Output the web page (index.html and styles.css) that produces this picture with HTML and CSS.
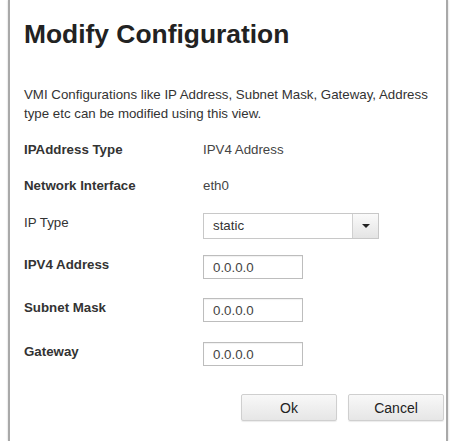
FILE: index.html
```html
<!DOCTYPE html>
<html lang="en">
<head>
    <meta charset="UTF-8">
    <meta name="viewport" content="width=device-width, initial-scale=1.0">
    <title>Modify Configuration</title>
    <link rel="stylesheet" href="styles.css">
</head>
<body>
    <div class="dialog">
        <h1>Modify Configuration</h1>
        <p class="intro">VMI Configurations like IP Address, Subnet Mask, Gateway, Address type etc can be modified using this view.</p>

        <div class="form">
            <div class="label">IPAddress Type</div>
            <div class="value">IPV4 Address</div>

            <div class="label">Network Interface</div>
            <div class="value">eth0</div>

            <!-- IP Type label is not bold in the original view -->
            <div class="label plain">IP Type</div>
            <div>
                <div class="select">
                    <span class="select-text">static</span>
                    <span class="select-btn"><span class="caret"></span></span>
                </div>
            </div>

            <div class="label">IPV4 Address</div>
            <div><input type="text" class="field" value="0.0.0.0"></div>

            <div class="label">Subnet Mask</div>
            <div><input type="text" class="field" value="0.0.0.0"></div>

            <div class="label">Gateway</div>
            <div><input type="text" class="field" value="0.0.0.0"></div>
        </div>

        <div class="buttons">
            <button class="btn">Ok</button>
            <button class="btn">Cancel</button>
        </div>
    </div>
</body>
</html>
```

FILE: styles.css
```css
body {
    margin: 0;
    background-color: #fff;
    font-family: "Liberation Sans", Arial, sans-serif;
    color: #333;
}
.dialog {
    margin-left: 8px;
    width: 440px;
    box-sizing: border-box;
    min-height: 441px;
    padding: 19px 2px 0 14px;
    border-left: 2px solid #a9a9a9;
    border-right: 2px solid #a9a9a9;
    box-shadow: 0 0 2px rgba(0, 0, 0, 0.2);
}
h1 {
    margin: 0;
    font-size: 26.4px;
    line-height: 30px;
    font-weight: bold;
    color: #222;
}
.intro {
    margin: 36px 0 0;
    font-size: 13.3px;
    line-height: 19px;
    color: #333;
}
.form {
    display: grid;
    grid-template-columns: 179px auto;
    grid-template-rows: 36px 35px 42px 43px 44px 52px;
    margin-top: 19px;
    font-size: 13.3px;
    line-height: 16px;
}
.label {
    font-weight: bold;
    color: #333;
    padding-top: 2px;
}
.label.plain {
    font-weight: normal;
}
.value {
    color: #444;
}
.form > .label:nth-child(1),
.form > .label:nth-child(3) {
    padding-top: 0;
}
.select {
    display: flex;
    width: 176px;
    height: 26px;
    box-sizing: border-box;
    border: 1px solid #c8c8c8;
    background-color: #fff;
}
.select-text {
    flex: 1;
    padding-left: 9px;
    line-height: 24px;
    color: #333;
}
.select-btn {
    width: 25px;
    border-left: 1px solid #d0d0d0;
    background: linear-gradient(#fafafa, #e4e4e4);
    display: flex;
    align-items: center;
    justify-content: center;
}
.caret {
    width: 0;
    height: 0;
    border-left: 4px solid transparent;
    border-right: 4px solid transparent;
    border-top: 4px solid #222;
}
.field {
    width: 100px;
    height: 24px;
    box-sizing: border-box;
    margin: 0;
    padding: 0 0 0 9px;
    border: 1px solid #bdbdbd;
    box-shadow: inset 0 1px 1px rgba(0, 0, 0, 0.06);
    font-family: inherit;
    font-size: 13.3px;
    color: #444;
}
.buttons {
    display: flex;
    justify-content: flex-end;
    gap: 11px;
}
.btn {
    width: 96px;
    height: 27px;
    margin: 0;
    border: 1px solid #cfcfcf;
    border-radius: 2px;
    background: linear-gradient(#f8f8f8, #e6e6e6);
    box-shadow: 0 1px 1px rgba(0, 0, 0, 0.08);
    font-family: inherit;
    font-size: 14px;
    color: #222;
}
```
